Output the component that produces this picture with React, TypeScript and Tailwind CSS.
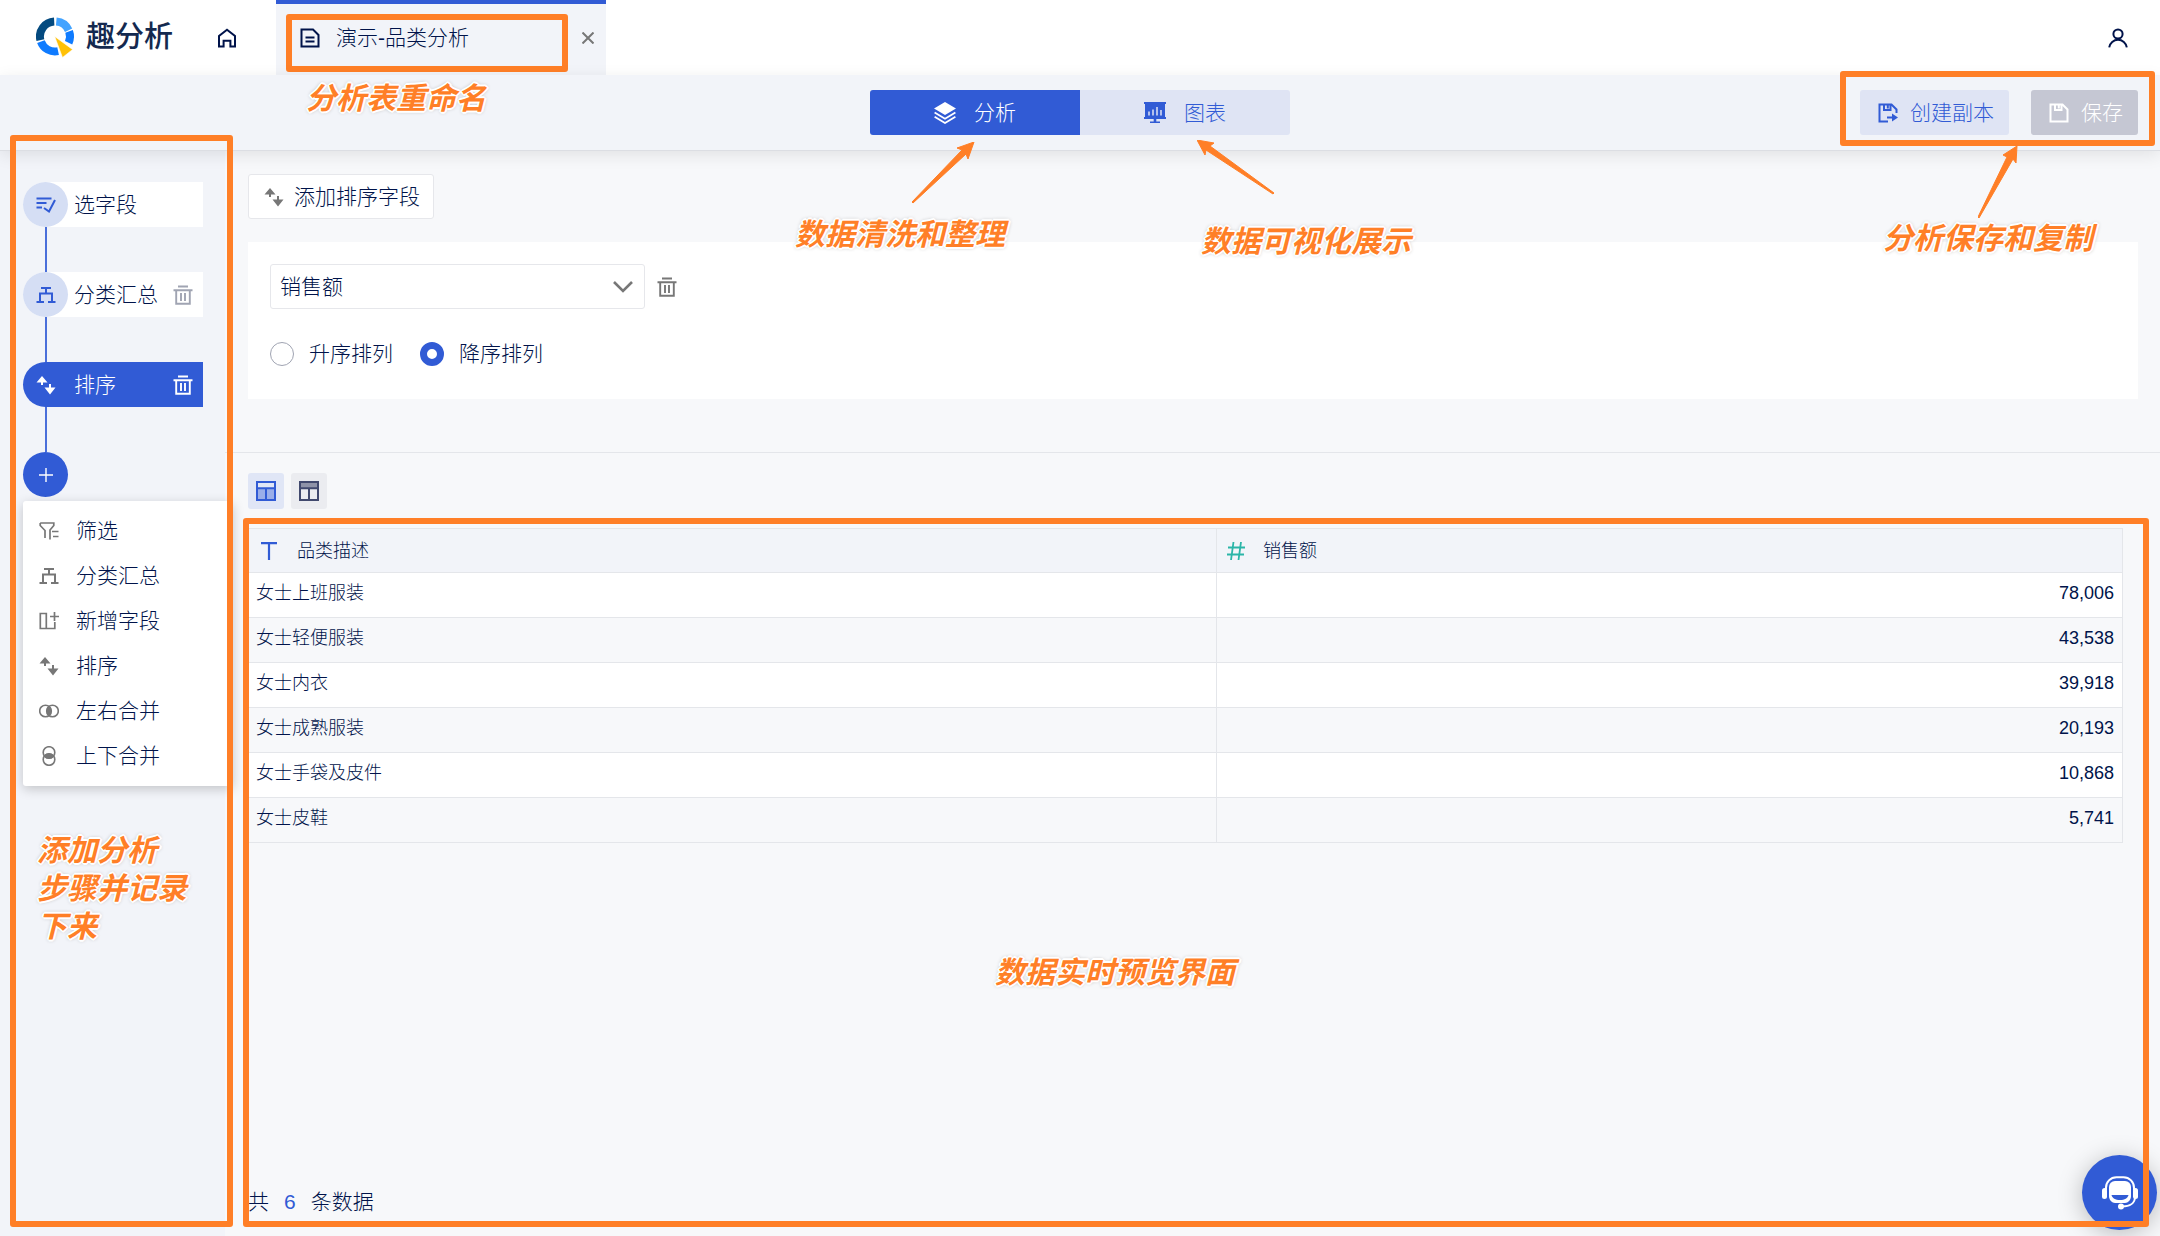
import { useState } from "react";
import type { ReactNode } from "react";

type IconProps = { className?: string };

const Svg = ({ className = "", children, box = "0 0 20 20" }: IconProps & { children: ReactNode; box?: string }) => (
  <svg viewBox={box} fill="none" stroke="currentColor" strokeWidth="2" className={`shrink-0 ${className}`} aria-hidden="true">
    {children}
  </svg>
);

const LogoMark = ({ className }: IconProps) => (
  <Svg className={className} box="0 0 40 42">
    <g strokeWidth="8">
      <path d="M4.4 23.1A15 15 0 0 1 18.2 4.5" stroke="#044a7f" />
      <path d="M20.3 4.6A15 15 0 0 1 32.6 13.2" stroke="#42a3ff" />
      <path d="M33.1 14.4A15 15 0 0 1 32.6 25.8" stroke="#0f7bff" />
      <path d="M4.9 24.6A15 15 0 0 0 22.1 34.2" stroke="#0f7bff" />
    </g>
    <path d="M18.7 19.5 36.600 32.500 26.500 40.500Z" fill="#ffc107" stroke="#ffffff" strokeWidth="0.6" />
  </Svg>
);

const HomeIcon = ({ className }: IconProps) => (
  <Svg className={className}>
    <path d="M2 18.500V8L10 1.800 18 8v10.500h-4.600v-5.700H6.600v5.700Z" />
  </Svg>
);

const DocIcon = ({ className }: IconProps) => (
  <Svg className={className}>
    <path d="M1.5 1.5H13L18.5 7v11.5h-17ZM5.5 9.5h9M5.5 13.5h9" />
  </Svg>
);

const UserIcon = ({ className }: IconProps) => (
  <Svg className={className}>
    <circle cx="10" cy="6" r="4.6" />
    <path d="M1.2 19.4a8.9 8.9 0 0 1 17.6 0" />
  </Svg>
);

const LayersIcon = ({ className }: IconProps) => (
  <Svg className={className} box="0 0 22 22">
    <path d="M11 0 22 6.5 11 13 0 6.5Z" fill="currentColor" stroke="none" />
    <path d="M.6 10.6 11 16.8l10.400-6.200M.6 14.800 11 21l10.400-6.200" strokeWidth="1.800" />
  </Svg>
);

const BoardIcon = ({ className }: IconProps) => (
  <Svg className={className} box="0 0 22 22">
    <path d="M0 0h22v2h-1v13h1v2H12.300v2.500H16V21H6v-1.500h3.700V17H0v-2h1V2H0Z" fill="currentColor" stroke="none" />
    <path d="M5 9.500v4M9 7.500v6M13 5v8.500M17 8v5.500" stroke="#dfe4f4" strokeWidth="1.500" />
  </Svg>
);

const SaveIcon = ({ className }: IconProps) => (
  <Svg className={className}>
    <path d="M1.500 1.500h12l5 5v12h-17ZM6 1.500V7h6.500V1.500M9.800 2.500v3" />
  </Svg>
);

const CopyIcon = ({ className }: IconProps) => (
  <Svg className={className}>
    <path d="M18.500 10V6.500l-5-5h-12v17H10M6 1.500V7h6.500V1.500M9.800 2.500v3M9 14.500h6" />
    <path d="M14 10.500 20 14.500l-6 4Z" fill="currentColor" stroke="none" />
  </Svg>
);

const PickIcon = ({ className }: IconProps) => (
  <Svg className={className}>
    <path d="M.5 3.500h15M.5 8h10M.5 12.500H6M8 13l5 3.500L19 5" />
  </Svg>
);

const TreeIcon = ({ className }: IconProps) => (
  <Svg className={className}>
    <path d="M5 3h10M10 3v5M4 17V8.500h12V17M.5 17h7.500M12 17h7.500" />
  </Svg>
);

const SortIcon = ({ className }: IconProps) => (
  <Svg className={className}>
    <path d="M6 10V5M14 9v6" />
    <path d="M6 1l5.500 6.500H.5ZM14 19.500 8.500 12.500h11Z" fill="currentColor" stroke="none" />
  </Svg>
);

const TrashIcon = ({ className }: IconProps) => (
  <Svg className={className}>
    <path d="M5 1.500h10M.5 5.300h19M3.200 5v13.700h13.600V5M8 8v8M12 8v8" strokeWidth="1.900" />
  </Svg>
);

const FilterIcon = ({ className }: IconProps) => (
  <Svg className={className}>
    <path d="M1.200 2h13.600v2.500L11 9v9.500M1.200 2v2.500L6 9.500V17M13 10.500h6.500M14 15.500h5.500" strokeWidth="1.700" />
  </Svg>
);

const AddColumnIcon = ({ className }: IconProps) => (
  <Svg className={className}>
    <path d="M1.300 2.500h6v15h-6ZM7.300 17.500h8.500V11M15.500 1v9M11 5.500h9" strokeWidth="1.700" />
  </Svg>
);

const JoinIcon = ({ className }: IconProps) => (
  <Svg className={className}>
    <circle cx="6.500" cy="10" r="5.800" strokeWidth="1.600" />
    <circle cx="13.500" cy="10" r="5.800" strokeWidth="1.600" />
    <path d="M10 5.400a5.800 5.800 0 0 1 0 9.200 5.800 5.800 0 0 1 0-9.200Z" fill="currentColor" strokeWidth="1" />
  </Svg>
);

const UnionIcon = ({ className }: IconProps) => (
  <Svg className={className}>
    <circle cx="10" cy="6.500" r="5.800" strokeWidth="1.600" />
    <circle cx="10" cy="13.500" r="5.800" strokeWidth="1.600" />
    <path d="M5.400 10a5.800 5.800 0 0 1 9.200 0 5.800 5.800 0 0 1-9.200 0Z" fill="currentColor" strokeWidth="1" />
  </Svg>
);

const TableIcon = ({ className, head, body }: IconProps & { head: string; body: string }) => (
  <Svg className={className}>
    <path d="M1 1h18v6H1Z" fill={head} stroke="none" />
    <path d="M1 7h18v12H1Z" fill={body} stroke="none" />
    <path d="M1 1h18v18H1ZM1 7.200h18M10 7.200V19" />
  </Svg>
);

const HeadsetIcon = ({ className }: IconProps) => (
  <Svg className={className} box="0 0 36 34">
    <path d="M4 14V12A10.500 10.500 0 0 1 14.500 1.200h7A10.500 10.500 0 0 1 32 12v2" />
    <path d="M33 21c0 6-5 9.500-13 9.500" />
    <rect x="0" y="12" width="5" height="11" rx="2.500" fill="currentColor" stroke="none" />
    <rect x="31" y="12" width="5" height="11" rx="2.500" fill="currentColor" stroke="none" />
    <circle cx="19" cy="30.500" r="3" fill="currentColor" stroke="none" />
    <path d="M13 5h10a6 6 0 0 1 6 6v9c0 4-3 7-6 7H13c-3 0-6-3-6-7v-9a6 6 0 0 1 6-6Z" fill="currentColor" stroke="none" />
    <path d="M9.500 19h17c-.5 3-4 5-8.500 5s-8-2-8.500-5Z" fill="#315bd5" stroke="none" />
  </Svg>
);

const Frame = ({ className }: IconProps) => (
  <div className={`pointer-events-none absolute rounded-[3px] border-6 border-[#ff7f27] ${className}`} />
);

const Note = ({ className = "", children }: IconProps & { children: ReactNode }) => (
  <p
    className={`pointer-events-none absolute text-[30px] leading-[38px] font-bold whitespace-nowrap text-[#ff7f27] italic [text-shadow:2px_0_#fff,-2px_0_#fff,0_2px_#fff,0_-2px_#fff,1px_1px_#fff,-1px_-1px_#fff,1px_-1px_#fff,-1px_1px_#fff,0_0_4px_#888] ${className}`}
  >
    {children}
  </p>
);

const Arrow = ({ className = "", box, points }: { className?: string; box: string; points: string }) => (
  <svg viewBox={box} className={`pointer-events-none absolute ${className}`} aria-hidden="true">
    <polygon points={points} fill="#ff7f27" stroke="#ff7f27" strokeWidth="1" />
  </svg>
);

const steps = [
  { label: "选字段", Icon: PickIcon, active: false, removable: false },
  { label: "分类汇总", Icon: TreeIcon, active: false, removable: true },
  { label: "排序", Icon: SortIcon, active: true, removable: true },
];

const actions = [
  { label: "筛选", Icon: FilterIcon },
  { label: "分类汇总", Icon: TreeIcon },
  { label: "新增字段", Icon: AddColumnIcon },
  { label: "排序", Icon: SortIcon },
  { label: "左右合并", Icon: JoinIcon },
  { label: "上下合并", Icon: UnionIcon },
];

const rows = [
  ["女士上班服装", "78,006"],
  ["女士轻便服装", "43,538"],
  ["女士内衣", "39,918"],
  ["女士成熟服装", "20,193"],
  ["女士手袋及皮件", "10,868"],
  ["女士皮鞋", "5,741"],
];

function Header() {
  return (
    <header className="flex h-[75px] shrink-0 items-stretch bg-white">
      <a href="#" className="ml-9 flex items-center gap-[10px] text-[29px] font-medium text-[#14294f]">
        <LogoMark className="h-[42px] w-10" />
        趣分析
      </a>
      <a href="#" aria-label="首页" className="ml-11 flex items-center">
        <HomeIcon className="size-5" />
      </a>
      <div className="relative ml-[39px] flex w-[330px] items-center border-t-4 border-[#315bd5] bg-[#f2f4f9] pb-1 pl-6">
        <DocIcon className="mr-4 size-5" />
        <span>演示-品类分析</span>
        <button type="button" aria-label="关闭" className="mr-3 ml-auto text-[#777]">
          <Svg className="size-3" box="0 0 12 12">
            <path d="M.5.5l11 11M11.500.5l-11 11" />
          </Svg>
        </button>
        <Frame className="top-[10px] right-[38px] bottom-[3px] left-[10px]" />
        <Note className="top-[76px] left-[30px] z-20">分析表重命名</Note>
      </div>
      <button type="button" aria-label="用户" className="mr-8 ml-auto">
        <UserIcon className="size-5" />
      </button>
    </header>
  );
}

function Toolbar() {
  return (
    <div className="relative z-10 grid shrink-0 grid-cols-[1fr_420px_1fr] items-center border-b border-[#dcdee3] bg-[#f2f4f9] py-[15px] shadow-[0_4px_16px_rgba(0,0,0,0.09)]">
      <nav className="relative col-start-2 grid grid-cols-2">
        <button type="button" className="flex h-[45px] items-center justify-center gap-[18px] rounded-l-[3px] bg-[#315bd5] text-white">
          <LayersIcon className="size-[22px]" />
          分析
        </button>
        <button type="button" className="flex h-[45px] items-center justify-center gap-[18px] rounded-r-[3px] bg-[#dfe4f4] text-[#315bd5]">
          <BoardIcon className="size-[22px]" />
          图表
        </button>
        <Arrow className="top-[52px] left-[42px] h-[62px] w-[63px]" box="0 0 63 62" points="62,0 45,6 50,8 0,60 1,61 54,12 56,17" />
        <Note className="top-[126px] -left-[75px]">数据清洗和整理</Note>
        <Arrow className="top-[50px] left-[327px] h-[55px] w-[78px]" box="0 0 78 55" points="0,0 17,3 13,6 77,53 76,54 9,10 8,15" />
        <Note className="top-[133px] left-[331px]">数据可视化展示</Note>
      </nav>
      <div className="relative mr-[22px] flex gap-[22px] justify-self-end">
        <button type="button" className="flex h-[45px] items-center gap-3 rounded-[3px] bg-[#dfe4f4] pr-[15px] pl-[18px] text-[#315bd5]">
          <CopyIcon className="size-5" />
          创建副本
        </button>
        <button type="button" className="flex h-[45px] items-center gap-3 rounded-[3px] bg-[#c5c7d3] pr-[15px] pl-[18px] text-white">
          <SaveIcon className="size-5" />
          保存
        </button>
        <Frame className="-top-[19px] -right-[17px] -bottom-[11px] -left-5" />
        <Arrow className="top-14 right-[120px] h-[73px] w-10" box="0 0 40 73" points="39,0 25,9 29,11 0,71 1,72 35,13 38,17" />
        <Note className="top-[130px] right-[45px]">分析保存和复制</Note>
      </div>
    </div>
  );
}

function Sidebar() {
  return (
    <aside className="relative z-20 w-[225px] shrink-0 pt-[31px] pl-[23px]">
      <ol className="w-[180px]">
        {steps.map(({ label, Icon, active, removable }) => (
          <li key={label}>
            <div
              className={
                active
                  ? "flex h-[45px] items-center rounded-l-full rounded-r-[2px] bg-[#315bd5] pr-[10px] text-white"
                  : "flex h-[45px] items-center rounded-l-full rounded-r-[2px] bg-white pr-[10px]"
              }
            >
              <span className={active ? "mr-[6px] grid size-[45px] place-items-center" : "mr-[6px] grid size-[45px] place-items-center rounded-full bg-[#d5def4] text-[#315bd5]"}>
                <Icon className="size-5" />
              </span>
              {label}
              {removable && (
                <button type="button" aria-label={`删除${label}`} className={active ? "ml-auto" : "ml-auto text-[#a0a4b2]"}>
                  <TrashIcon className="size-5" />
                </button>
              )}
            </div>
            <div className="ml-[22px] h-[45px] w-[2px] bg-[#4a6fda]" />
          </li>
        ))}
      </ol>
      <button type="button" aria-label="添加步骤" className="grid size-[45px] place-items-center rounded-full bg-[#315bd5] text-white">
        <Svg className="size-[14px]" box="0 0 14 14">
          <path d="M7 0v14M0 7h14" strokeWidth="1.400" />
        </Svg>
      </button>
      <ul className="mt-1 w-[210px] rounded-[3px] bg-white pt-[7px] pb-2 shadow-[0_3px_12px_rgba(0,0,0,0.2)]">
        {actions.map(({ label, Icon }) => (
          <li key={label}>
            <button type="button" className="flex h-[45px] w-full items-center gap-[17px] pl-4">
              <Icon className="size-5 text-[#777]" />
              {label}
            </button>
          </li>
        ))}
      </ul>
      <Frame className="-top-4 -right-2 bottom-[9px] left-[10px]" />
      <Note className="top-[681px] left-[37px]">
        添加分析
        <br />
        步骤并记录
        <br />
        下来
      </Note>
    </aside>
  );
}

function SortPanel() {
  const [order, setOrder] = useState("desc");
  const options = [
    ["asc", "升序排列"],
    ["desc", "降序排列"],
  ];
  return (
    <section className="border-b border-[#e4e6ea] pt-[23px] pr-[22px] pb-[53px] pl-[23px]">
      <button type="button" className="flex h-[45px] items-center gap-[10px] rounded-[3px] border border-[#e6e7eb] bg-white pr-[13px] pl-[15px]">
        <SortIcon className="size-5 text-[#777]" />
        添加排序字段
      </button>
      <div className="mt-[23px] bg-white px-[22px] pt-[22px] pb-[31px]">
        <div className="flex items-center gap-3">
          <div className="relative w-[375px]">
            <select aria-label="排序字段" className="h-[45px] w-full appearance-none rounded-[3px] border border-[#e6e7eb] bg-white px-[9px]">
              <option>销售额</option>
            </select>
            <Svg className="pointer-events-none absolute top-[17px] right-3 h-3 w-5 text-[#777]" box="0 0 20 12">
              <path d="M1 1l9 9 9-9" strokeWidth="2.600" />
            </Svg>
          </div>
          <button type="button" aria-label="删除排序字段" className="text-[#777]">
            <TrashIcon className="size-5" />
          </button>
        </div>
        <div className="mt-[31px] flex gap-[27px]">
          {options.map(([value, label]) => (
            <label key={value} className="flex items-center gap-[15px] leading-7">
              <input
                type="radio"
                name="order"
                value={value}
                checked={order === value}
                onChange={() => setOrder(value)}
                className="size-6 appearance-none rounded-full border border-[#a0a4b2] bg-white checked:border-7 checked:border-[#315bd5]"
              />
              {label}
            </label>
          ))}
        </div>
      </div>
    </section>
  );
}

function Preview() {
  return (
    <section className="relative flex grow flex-col pt-5 pr-[37px] pb-[18px] pl-[23px]">
      <div className="flex gap-[7px]">
        <button type="button" aria-label="表格视图" className="grid size-9 place-items-center rounded-[3px] bg-[#e0e6f6] text-[#315bd5]">
          <TableIcon className="size-5" head="#e0e6f6" body="#9aaee9" />
        </button>
        <button type="button" aria-label="表头视图" className="grid size-9 place-items-center rounded-[3px] bg-[#ebecf0] text-[#41496e]">
          <TableIcon className="size-5" head="#8f93a8" body="#ebecf0" />
        </button>
      </div>
      <table className="mt-[19px] w-full table-fixed border-collapse text-lg leading-6">
        <colgroup>
          <col className="w-[968px]" />
          <col />
        </colgroup>
        <thead>
          <tr className="h-11 bg-[#f2f4f9]">
            <th className="border border-[#e4e6ea] pl-[11px] text-left font-light">
              <span className="flex items-center gap-[19px]">
                <Svg className="size-[18px] text-[#315bd5]" box="0 0 18 18">
                  <path d="M1 1.200h16M9 1v17" strokeWidth="2.200" />
                </Svg>
                品类描述
              </span>
            </th>
            <th className="border border-[#e4e6ea] pl-[10px] text-left font-light">
              <span className="flex items-center gap-[18px]">
                <Svg className="size-[18px] text-[#2bb5a8]" box="0 0 18 18">
                  <path d="M6.500 0 4 18M14 0l-2.500 18M1 5.500h17M0 12.500h17" strokeWidth="1.800" />
                </Svg>
                销售额
              </span>
            </th>
          </tr>
        </thead>
        <tbody>
          {rows.map(([name, amount]) => (
            <tr key={name} className="h-[45px] odd:bg-white even:bg-[#f7f8fa]">
              <td className="border border-[#e4e6ea] px-[7px] pb-1">{name}</td>
              <td className="border border-[#e4e6ea] px-2 pb-1 text-right">{amount}</td>
            </tr>
          ))}
        </tbody>
      </table>
      <p className="mt-auto leading-8">
        共<span className="mx-[15px] text-[#315bd5]">6</span>条数据
      </p>
      <Frame className="top-[65px] right-[11px] bottom-[9px] left-[18px] z-30" />
      <Note className="top-[501px] left-[770px]">数据实时预览界面</Note>
    </section>
  );
}

export default function App() {
  return (
    <div className="relative flex min-h-screen flex-col bg-[#f2f4f9] font-['Liberation_Sans','Noto_Sans_CJK_SC',sans-serif] text-[21px] font-light text-[#00134a]">
      <Header />
      <Toolbar />
      <div className="flex grow">
        <Sidebar />
        <main className="flex min-w-0 grow flex-col bg-[#f7f8fa]">
          <SortPanel />
          <Preview />
        </main>
      </div>
      <button
        type="button"
        aria-label="在线客服"
        className="absolute right-[3px] bottom-[6px] z-20 grid size-[75px] place-items-center rounded-full bg-[#315bd5] text-white shadow-[0_4px_24px_rgba(0,0,0,0.25)]"
      >
        <HeadsetIcon className="h-[34px] w-9" />
      </button>
    </div>
  );
}
